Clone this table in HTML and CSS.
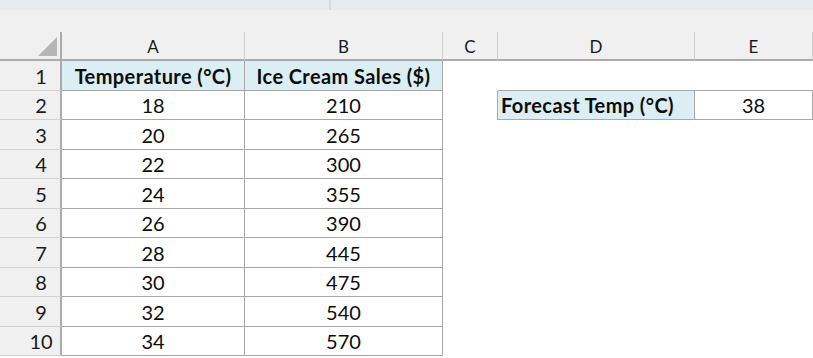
FILE: index.html
```html
<!DOCTYPE html>
<html>
<head>
<meta charset="utf-8">
<link rel="stylesheet" href="styles.css">
</head>
<body>
<div class="app">
  <div class="ribbon-edge"><div class="ribbon-left"></div><div class="ribbon-right"></div></div>
  <div class="gap"></div>
  <div class="sheet">
    <div class="corner"><svg width="19" height="19" viewBox="0 0 19 19"><polygon points="19,0 19,19 0,19" fill="#b5b5b5"/></svg></div>
    <div class="colhead">A</div>
    <div class="colhead">B</div>
    <div class="colhead">C</div>
    <div class="colhead">D</div>
    <div class="colhead last">E</div>

    <div class="rowhead r30">1</div>
    <div class="cell hdr">Temperature (°C)</div>
    <div class="cell hdr">Ice Cream Sales ($)</div>
    <div class="blank"></div>
    <div class="blank bb"></div>
    <div class="blank bb"></div>

    <div class="rowhead r29">2</div>
    <div class="cell">18</div>
    <div class="cell">210</div>
    <div class="blank br"></div>
    <div class="cell hdr fc">Forecast Temp (°C)</div>
    <div class="cell">38</div>

    <div class="rowhead r30">3</div>
    <div class="cell">20</div>
    <div class="cell">265</div>
    <div class="blank"></div><div class="blank"></div><div class="blank"></div>

    <div class="rowhead r29">4</div>
    <div class="cell">22</div>
    <div class="cell">300</div>
    <div class="blank"></div><div class="blank"></div><div class="blank"></div>

    <div class="rowhead r30">5</div>
    <div class="cell">24</div>
    <div class="cell">355</div>
    <div class="blank"></div><div class="blank"></div><div class="blank"></div>

    <div class="rowhead r29">6</div>
    <div class="cell">26</div>
    <div class="cell">390</div>
    <div class="blank"></div><div class="blank"></div><div class="blank"></div>

    <div class="rowhead r30">7</div>
    <div class="cell">28</div>
    <div class="cell">445</div>
    <div class="blank"></div><div class="blank"></div><div class="blank"></div>

    <div class="rowhead r29">8</div>
    <div class="cell">30</div>
    <div class="cell">475</div>
    <div class="blank"></div><div class="blank"></div><div class="blank"></div>

    <div class="rowhead r30">9</div>
    <div class="cell">32</div>
    <div class="cell">540</div>
    <div class="blank"></div><div class="blank"></div><div class="blank"></div>

    <div class="rowhead r29">10</div>
    <div class="cell">34</div>
    <div class="cell">570</div>
    <div class="blank"></div><div class="blank"></div><div class="blank"></div>
  </div>
</div>
</body>
</html>
```
FILE: styles.css
```css
* { box-sizing: border-box; }
html, body { margin: 0; padding: 0; background: #ffffff; }
body { font-family: "Lato", "Noto Sans", sans-serif; color: #111; }
.app { width: 813px; height: 358px; overflow: hidden; background: #ffffff; }
.ribbon-edge { display: flex; height: 10px; background: #e8ebee; }
.ribbon-left { width: 331px; border-right: 2px solid #d6d8db; }
.ribbon-right { flex: 1; }
.gap { height: 22px; background: #f0f0f0; }
.sheet {
  display: grid;
  grid-template-columns: 62px 183px 198px 55px 197px 118px;
  grid-template-rows: 29px repeat(10, auto);
}
.corner {
  background: #f0f0f0;
  border-right: 2px solid #ababab;
  border-bottom: 2px solid #ababab;
  display: flex; justify-content: flex-end; align-items: flex-end;
  padding: 0 3px 3px 0;
}
.colhead {
  background: #f0f0f0;
  border-right: 1px solid #cfcfcf;
  border-bottom: 2px solid #ababab;
  display: flex; align-items: center; justify-content: center;
  font-size: 17px; color: #1a1a1a; padding-top: 1px;
}
.colhead.last { border-right: 1px solid #cfcfcf; }
.rowhead {
  background: #f0f0f0;
  border-right: 2px solid #ababab;
  border-bottom: 1px solid #d2d2d2;
  display: flex; align-items: center; justify-content: center;
  padding-left: 22px;
  font-size: 20px; color: #1a1a1a;
}
.r30 { height: 30px; }
.r29 { height: 29px; }
.cell {
  border-right: 1px solid #a8a8a8;
  border-bottom: 1px solid #a8a8a8;
  display: flex; align-items: center; justify-content: center;
  font-size: 20px; color: #0d0d0d;
}
.hdr { background: #dbeef4; font-weight: 700; letter-spacing: 0.4px; }
.fc { justify-content: flex-start; padding-left: 3px; }
.blank { background: #fff; }
.bb { border-bottom: 1px solid #a8a8a8; }
.br { border-right: 1px solid #a8a8a8; }
```
